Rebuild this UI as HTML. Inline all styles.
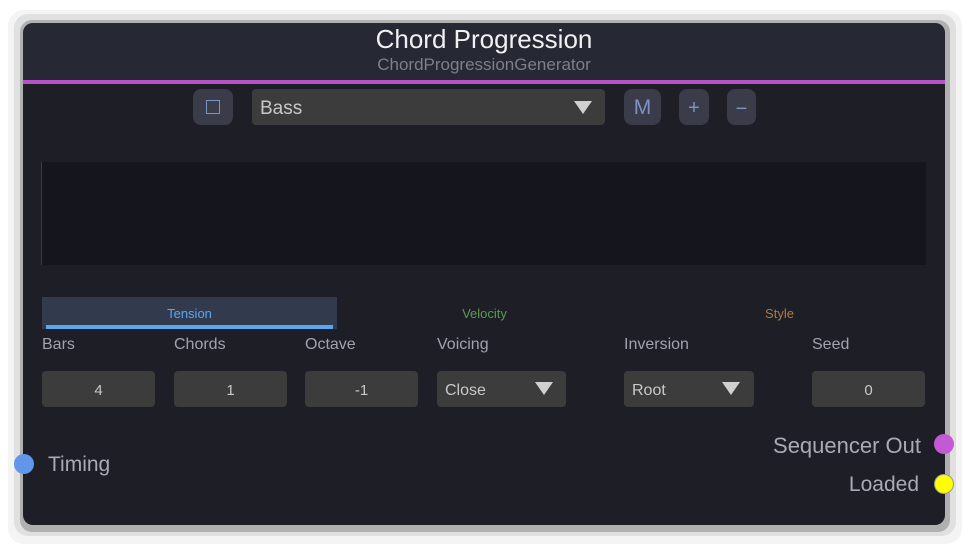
<!DOCTYPE html>
<html><head><style>
body{margin:0;width:968px;height:548px;background:#fff;position:relative;overflow:hidden;font-family:"Liberation Sans",sans-serif}
div{position:absolute;box-sizing:border-box}
.outer{left:8px;top:10px;width:954px;height:534px;background:#f4f4f4;border-radius:16px}
.mid{left:14px;top:14px;width:942px;height:522px;background:#e0e0e0;border-radius:14px}
.gray{left:20px;top:20px;width:930px;height:512px;background:#b0b0b0;border-radius:12px}
.panel{left:23px;top:23px;width:922px;height:502px;background:#1d1e26;border-radius:10px;overflow:hidden}
.hdr{left:0;top:0;width:922px;height:57px;background:#262833}
.line{left:0;top:57px;width:922px;height:4px;background:#b652c8}
.t{white-space:nowrap}
.btn{background:#3a3c4a;border-radius:8px;color:#7d93c4;text-align:center}
.box{background:#3c3c3c;border-radius:4px;color:#c8c8c8;font-size:15px;text-align:center;line-height:40px}
.lbl{color:#a0a3ad;font-size:16px}
.tri{width:0;height:0;border-left:9px solid transparent;border-right:9px solid transparent;border-top:13px solid #d0d0d0}
</style></head><body>
<div class="outer"></div><div class="mid"></div><div class="gray"></div>
<div class="panel">
<div class="hdr"></div><div class="line"></div>
<div class="t" style="left:0;width:922px;top:1px;text-align:center;color:#f0f0f0;font-size:26px">Chord Progression</div>
<div class="t" style="left:0;width:922px;top:32px;text-align:center;color:#7c7f8c;font-size:17px">ChordProgressionGenerator</div>

<div class="btn" style="left:170px;top:66px;width:40px;height:36px"><div style="left:13px;top:11px;width:14px;height:14px;border:1.5px solid #7d93c4"></div></div>
<div class="box" style="left:229px;top:66px;width:353px;height:36px;text-align:left;padding-left:8px;font-size:19px;line-height:40px">Bass</div>
<div class="tri" style="left:551px;top:78px"></div>
<div class="btn" style="left:601px;top:66px;width:37px;height:36px;font-size:21px;line-height:38px">M</div>
<div class="btn" style="left:656px;top:66px;width:30px;height:36px;font-size:20px;line-height:38px">+</div>
<div class="btn" style="left:704px;top:66px;width:29px;height:36px;font-size:20px;line-height:40px">−</div>

<div style="left:18px;top:139px;width:885px;height:103px;background:#15161d;border-left:1px solid #6a2a30"></div>

<div style="left:19px;top:274px;width:295px;height:32px;background:#323b4e"></div>
<div style="left:23px;top:302px;width:287px;height:4px;background:#5aa6f0"></div>
<div class="t" style="left:19px;width:295px;top:283px;text-align:center;color:#5aa6f0;font-size:13px">Tension</div>
<div class="t" style="left:314px;width:295px;top:283px;text-align:center;color:#5e9a4c;font-size:13px">Velocity</div>
<div class="t" style="left:609px;width:295px;top:283px;text-align:center;color:#b07a40;font-size:13px">Style</div>

<div class="t lbl" style="left:19px;top:313px">Bars</div>
<div class="t lbl" style="left:151px;top:313px">Chords</div>
<div class="t lbl" style="left:282px;top:313px">Octave</div>
<div class="t lbl" style="left:414px;top:313px">Voicing</div>
<div class="t lbl" style="left:601px;top:313px">Inversion</div>
<div class="t lbl" style="left:789px;top:313px">Seed</div>

<div class="box" style="left:19px;top:348px;width:113px;height:36px">4</div>
<div class="box" style="left:151px;top:348px;width:113px;height:36px">1</div>
<div class="box" style="left:282px;top:348px;width:113px;height:36px">-1</div>
<div class="box" style="left:414px;top:348px;width:129px;height:36px;text-align:left;padding-left:8px;font-size:16px">Close</div>
<div class="tri" style="left:512px;top:359px"></div>
<div class="box" style="left:601px;top:348px;width:130px;height:36px;text-align:left;padding-left:8px;font-size:16px">Root</div>
<div class="tri" style="left:699px;top:359px"></div>
<div class="box" style="left:789px;top:348px;width:113px;height:36px">0</div>

<div class="t" style="left:25px;top:430px;color:#a8abb5;font-size:21px">Timing</div>
<div class="t" style="right:24px;top:410px;color:#a8abb5;font-size:22px">Sequencer Out</div>
<div class="t" style="right:26px;top:450px;color:#a8abb5;font-size:21px">Loaded</div>
</div>
<div style="left:14px;top:454px;width:20px;height:20px;border-radius:50%;background:#6196ea"></div>
<div style="left:934px;top:434px;width:20px;height:20px;border-radius:50%;background:#c25ad6"></div>
<div style="left:934px;top:474px;width:20px;height:20px;border-radius:50%;background:#ffff00;border:1px solid #999"></div>
</body></html>
